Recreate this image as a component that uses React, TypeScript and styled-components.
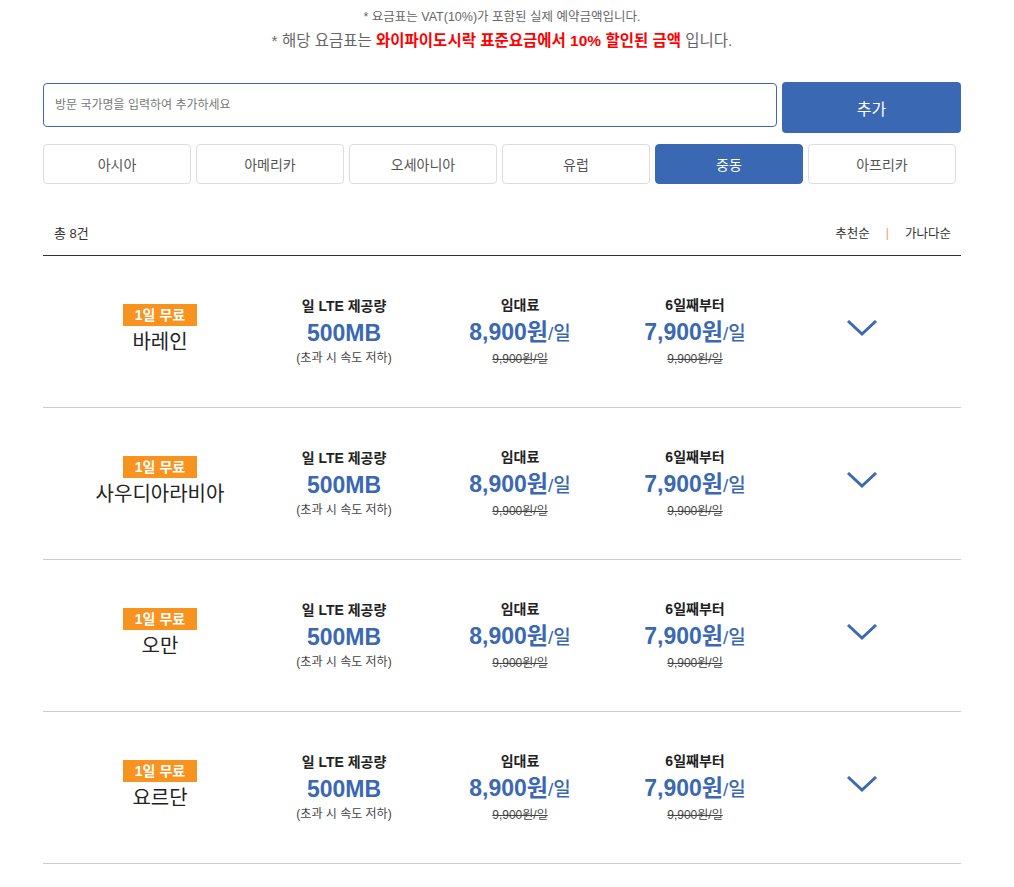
import React, { useState } from 'react';
import styled, { createGlobalStyle } from 'styled-components';

const BLUE = '#3a68b3';
const ORANGE = '#f7931e';
const LINE = '#cccccc';

const GlobalStyle = createGlobalStyle`
  body {
    margin: 0;
    background: #fff;
    font-family: "Liberation Sans", "Noto Sans CJK KR", sans-serif;
    color: #333;
  }
`;

const Page = styled.div`
  width: 918px;
  margin-left: 43px;
  padding-top: 9px;
`;

const Notice = styled.div`
  text-align: center;
  margin-bottom: 31px;
`;

const NoticeSmall = styled.p`
  margin: 0;
  font-size: 12.5px;
  line-height: 16px;
  color: #666;
`;

const NoticeLarge = styled.p`
  margin: 6px 0 0;
  font-size: 15.5px;
  line-height: 20px;
  color: #666;
`;

const Red = styled.strong`
  color: #ff0000;
`;

const SearchRow = styled.div`
  display: flex;
  gap: 5px;
  align-items: flex-start;
`;

const SearchInput = styled.input`
  flex: 1;
  height: 44px;
  margin-top: 1px;
  box-sizing: border-box;
  border: 1px solid ${BLUE};
  border-radius: 4px;
  padding: 0 11px;
  font-family: inherit;
  font-size: 12px;
  outline: none;

  &::placeholder {
    color: #777;
  }
`;

const AddButton = styled.button`
  width: 179px;
  height: 51px;
  border: none;
  border-radius: 4px;
  background: ${BLUE};
  color: #fff;
  font-family: inherit;
  font-size: 16px;
  cursor: pointer;
`;

const Tabs = styled.div`
  display: grid;
  grid-template-columns: repeat(6, 148px);
  gap: 5px;
  margin-top: 11px;
`;

const Tab = styled.button<{ $active?: boolean }>`
  height: 40px;
  border: 1px solid ${p => (p.$active ? BLUE : '#dddddd')};
  border-radius: 4px;
  background: ${p => (p.$active ? BLUE : '#fff')};
  color: ${p => (p.$active ? '#fff' : '#555')};
  font-family: inherit;
  font-size: 14px;
  cursor: pointer;
`;

const ListHeader = styled.div`
  display: flex;
  justify-content: space-between;
  align-items: center;
  height: 45px;
  margin-top: 26px;
  padding: 0 10px 0 11px;
  border-bottom: 1px solid #333;
  font-size: 13px;
`;

const Sort = styled.div`
  display: flex;
  align-items: center;
  gap: 16px;
  font-size: 12.5px;
  color: #333;
`;

const SortBar = styled.span`
  color: #f0a26a;
`;

const Row = styled.div`
  display: grid;
  grid-template-columns: 234px 134px 218px 132px 200px;
  align-items: center;
  height: 151px;
  border-bottom: 1px solid ${LINE};
`;

const Cell = styled.div`
  display: flex;
  flex-direction: column;
  align-items: center;
  text-align: center;
`;

const CountryCell = styled(Cell)`
  padding-bottom: 4px;
`;

const Badge = styled.span`
  display: inline-block;
  width: 74px;
  height: 22px;
  line-height: 22px;
  background: ${ORANGE};
  color: #fff;
  font-size: 14px;
  font-weight: bold;
`;

const Country = styled.div`
  margin-top: 2px;
  font-size: 20px;
  line-height: 28px;
  color: #222;
`;

const Label = styled.div`
  font-size: 14px;
  line-height: 18px;
  font-weight: bold;
  color: #222;
`;

const Value = styled.div`
  margin-top: 4px;
  font-size: 23px;
  line-height: 28px;
  font-weight: bold;
  color: ${BLUE};
`;

const Per = styled.span`
  font-size: 19px;
  font-weight: 500;
`;

const Sub = styled.div`
  margin-top: 2px;
  font-size: 12px;
  line-height: 18px;
  color: #444;
`;

const Strike = styled(Sub)`
  text-decoration: line-through;
`;

const Chevron = () => (
  <svg width="32" height="18" viewBox="0 0 32 18">
    <polyline points="2,2 16,15 30,2" fill="none" stroke={BLUE} strokeWidth="3" />
  </svg>
);

const ChevronCell = styled.div`
  display: flex;
  justify-content: center;
  margin-top: -8px;
  padding-left: 2px;
`;

const regions = ['아시아', '아메리카', '오세아니아', '유럽', '중동', '아프리카'];
const countries = ['바레인', '사우디아라비아', '오만', '요르단'];

export default function App() {
  const [active, setActive] = useState('중동');
  return (
    <>
      <GlobalStyle />
      <Page>
        <Notice>
          <NoticeSmall>* 요금표는 VAT(10%)가 포함된 실제 예약금액입니다.</NoticeSmall>
          <NoticeLarge>
            * 해당 요금표는 <Red>와이파이도시락 표준요금에서 10% 할인된 금액</Red> 입니다.
          </NoticeLarge>
        </Notice>

        <SearchRow>
          <SearchInput placeholder="방문 국가명을 입력하여 추가하세요" />
          <AddButton>추가</AddButton>
        </SearchRow>

        <Tabs>
          {regions.map(r => (
            <Tab key={r} $active={r === active} onClick={() => setActive(r)}>
              {r}
            </Tab>
          ))}
        </Tabs>

        <ListHeader>
          <span>총 8건</span>
          <Sort>
            <span>추천순</span>
            <SortBar>|</SortBar>
            <span>가나다순</span>
          </Sort>
        </ListHeader>

        {countries.map(c => (
          <Row key={c}>
            <CountryCell>
              <Badge>1일 무료</Badge>
              <Country>{c}</Country>
            </CountryCell>
            <Cell>
              <Label>일 LTE 제공량</Label>
              <Value>500MB</Value>
              <Sub>(초과 시 속도 저하)</Sub>
            </Cell>
            <Cell>
              <Label>임대료</Label>
              <Value>
                8,900원<Per>/일</Per>
              </Value>
              <Strike>9,900원/일</Strike>
            </Cell>
            <Cell>
              <Label>6일째부터</Label>
              <Value>
                7,900원<Per>/일</Per>
              </Value>
              <Strike>9,900원/일</Strike>
            </Cell>
            <ChevronCell>
              <Chevron />
            </ChevronCell>
          </Row>
        ))}
      </Page>
    </>
  );
}
